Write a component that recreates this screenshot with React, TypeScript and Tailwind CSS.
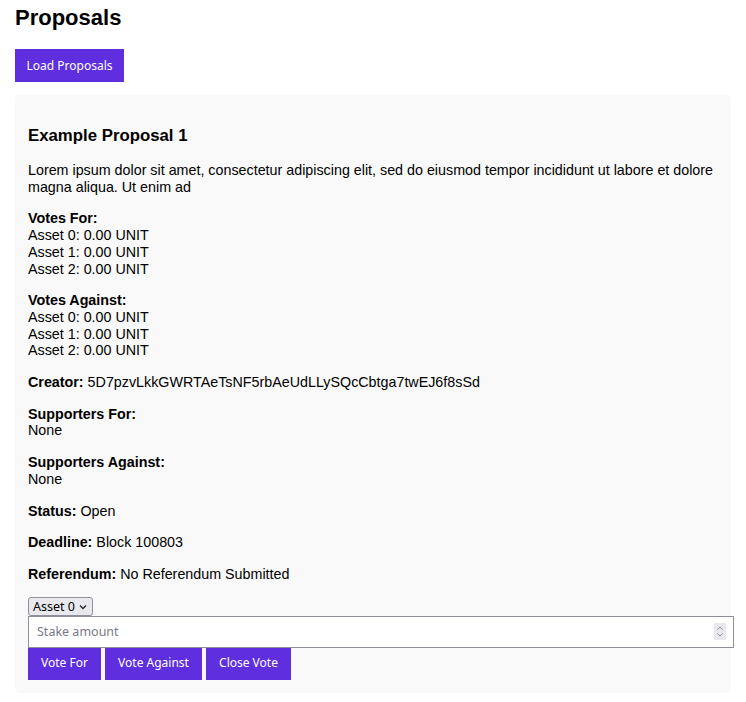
import React from 'react';

const ui = { fontFamily: '"Noto Sans", "Open Sans", sans-serif' };
const body = { fontFamily: '"Liberation Sans", Arial, sans-serif' };

const assets = ['Asset 0', 'Asset 1', 'Asset 2'];

const Field = ({ label, children }: { label: string; children?: React.ReactNode }) => (
  <div className="mt-[15px]">
    <span className="font-bold">{label}</span> {children}
  </div>
);

const VoteList = ({ label }: { label: string }) => (
  <div className="mt-[15px]">
    <div className="font-bold">{label}</div>
    {assets.map((a) => (
      <div key={a}>{a}: 0.00 UNIT</div>
    ))}
  </div>
);

const Btn = ({ w, children }: { w: string; children: React.ReactNode }) => (
  <button
    style={ui}
    className={`${w} h-[32px] bg-[#5f2ede] text-white text-[12px] flex items-center justify-center`}
  >
    {children}
  </button>
);

export default function App() {
  return (
    <div className="min-h-[702px] bg-white px-[15px] pt-[5px] text-black" style={body}>
      <h1 className="text-[22px] leading-[26px] font-bold">Proposals</h1>
      <button
        style={ui}
        className="mt-[18px] w-[109px] h-[33px] bg-[#5f2ede] text-white text-[12px]"
      >
        Load Proposals
      </button>

      <div className="mt-[13px] bg-[#f9f9f9] rounded-[5px] px-[13px] pb-[13px] pt-[31px] text-[14.3px] leading-[16.7px]">
        <h3 className="text-[16.8px] leading-[20px] font-bold">Example Proposal 1</h3>
        <p className="mt-[16px]">
          Lorem ipsum dolor sit amet, consectetur adipiscing elit, sed do eiusmod tempor incididunt ut labore et
          dolore magna aliqua. Ut enim ad
        </p>
        <VoteList label="Votes For:" />
        <VoteList label="Votes Against:" />
        <Field label="Creator:">5D7pzvLkkGWRTAeTsNF5rbAeUdLLySQcCbtga7twEJ6f8sSd</Field>
        <div className="mt-[15px]">
          <div className="font-bold">Supporters For:</div>
          <div>None</div>
        </div>
        <div className="mt-[15px]">
          <div className="font-bold">Supporters Against:</div>
          <div>None</div>
        </div>
        <Field label="Status:">Open</Field>
        <Field label="Deadline:">Block 100803</Field>
        <Field label="Referendum:">No Referendum Submitted</Field>

        <div className="mt-[14px] flex flex-col items-start">
          <div className="relative">
            <select
              style={ui}
              className="appearance-none h-[19px] w-[65px] pl-[4px] pr-[16px] text-[12.5px] leading-[17px] bg-[#e9e9ed] border border-[#8f8f9d] rounded-[3px] text-black"
            >
              <option>Asset 0</option>
              <option>Asset 1</option>
              <option>Asset 2</option>
            </select>
            <svg
              className="absolute right-[6px] top-[7px] pointer-events-none"
              width="8"
              height="6"
              viewBox="0 0 8 6"
            >
              <path d="M1 1.5 L4 4.5 L7 1.5" fill="none" stroke="#222" strokeWidth="1.3" />
            </svg>
          </div>
          <div className="relative w-[706px]">
            <input
              type="text"
              placeholder="Stake amount"
              style={ui}
              className="block w-full h-[32px] px-[8px] text-[12.5px] bg-white border border-[#8f8f9d] placeholder:text-[#7a7a84] outline-none"
            />
            <div className="absolute right-[8px] top-[7px] w-[12px] h-[17px] bg-[#e9e9ed] flex items-center justify-center">
              <svg width="8" height="13" viewBox="0 0 8 13">
                <path d="M1.5 4.5 L4 2 L6.5 4.5" fill="none" stroke="#8f8f9d" strokeWidth="1" />
                <path d="M1.5 8.5 L4 11 L6.5 8.5" fill="none" stroke="#8f8f9d" strokeWidth="1" />
              </svg>
            </div>
          </div>
          <div className="flex gap-[4px]">
            <Btn w="w-[73px]">Vote For</Btn>
            <Btn w="w-[97px]">Vote Against</Btn>
            <Btn w="w-[85px]">Close Vote</Btn>
          </div>
        </div>
      </div>
    </div>
  );
}
